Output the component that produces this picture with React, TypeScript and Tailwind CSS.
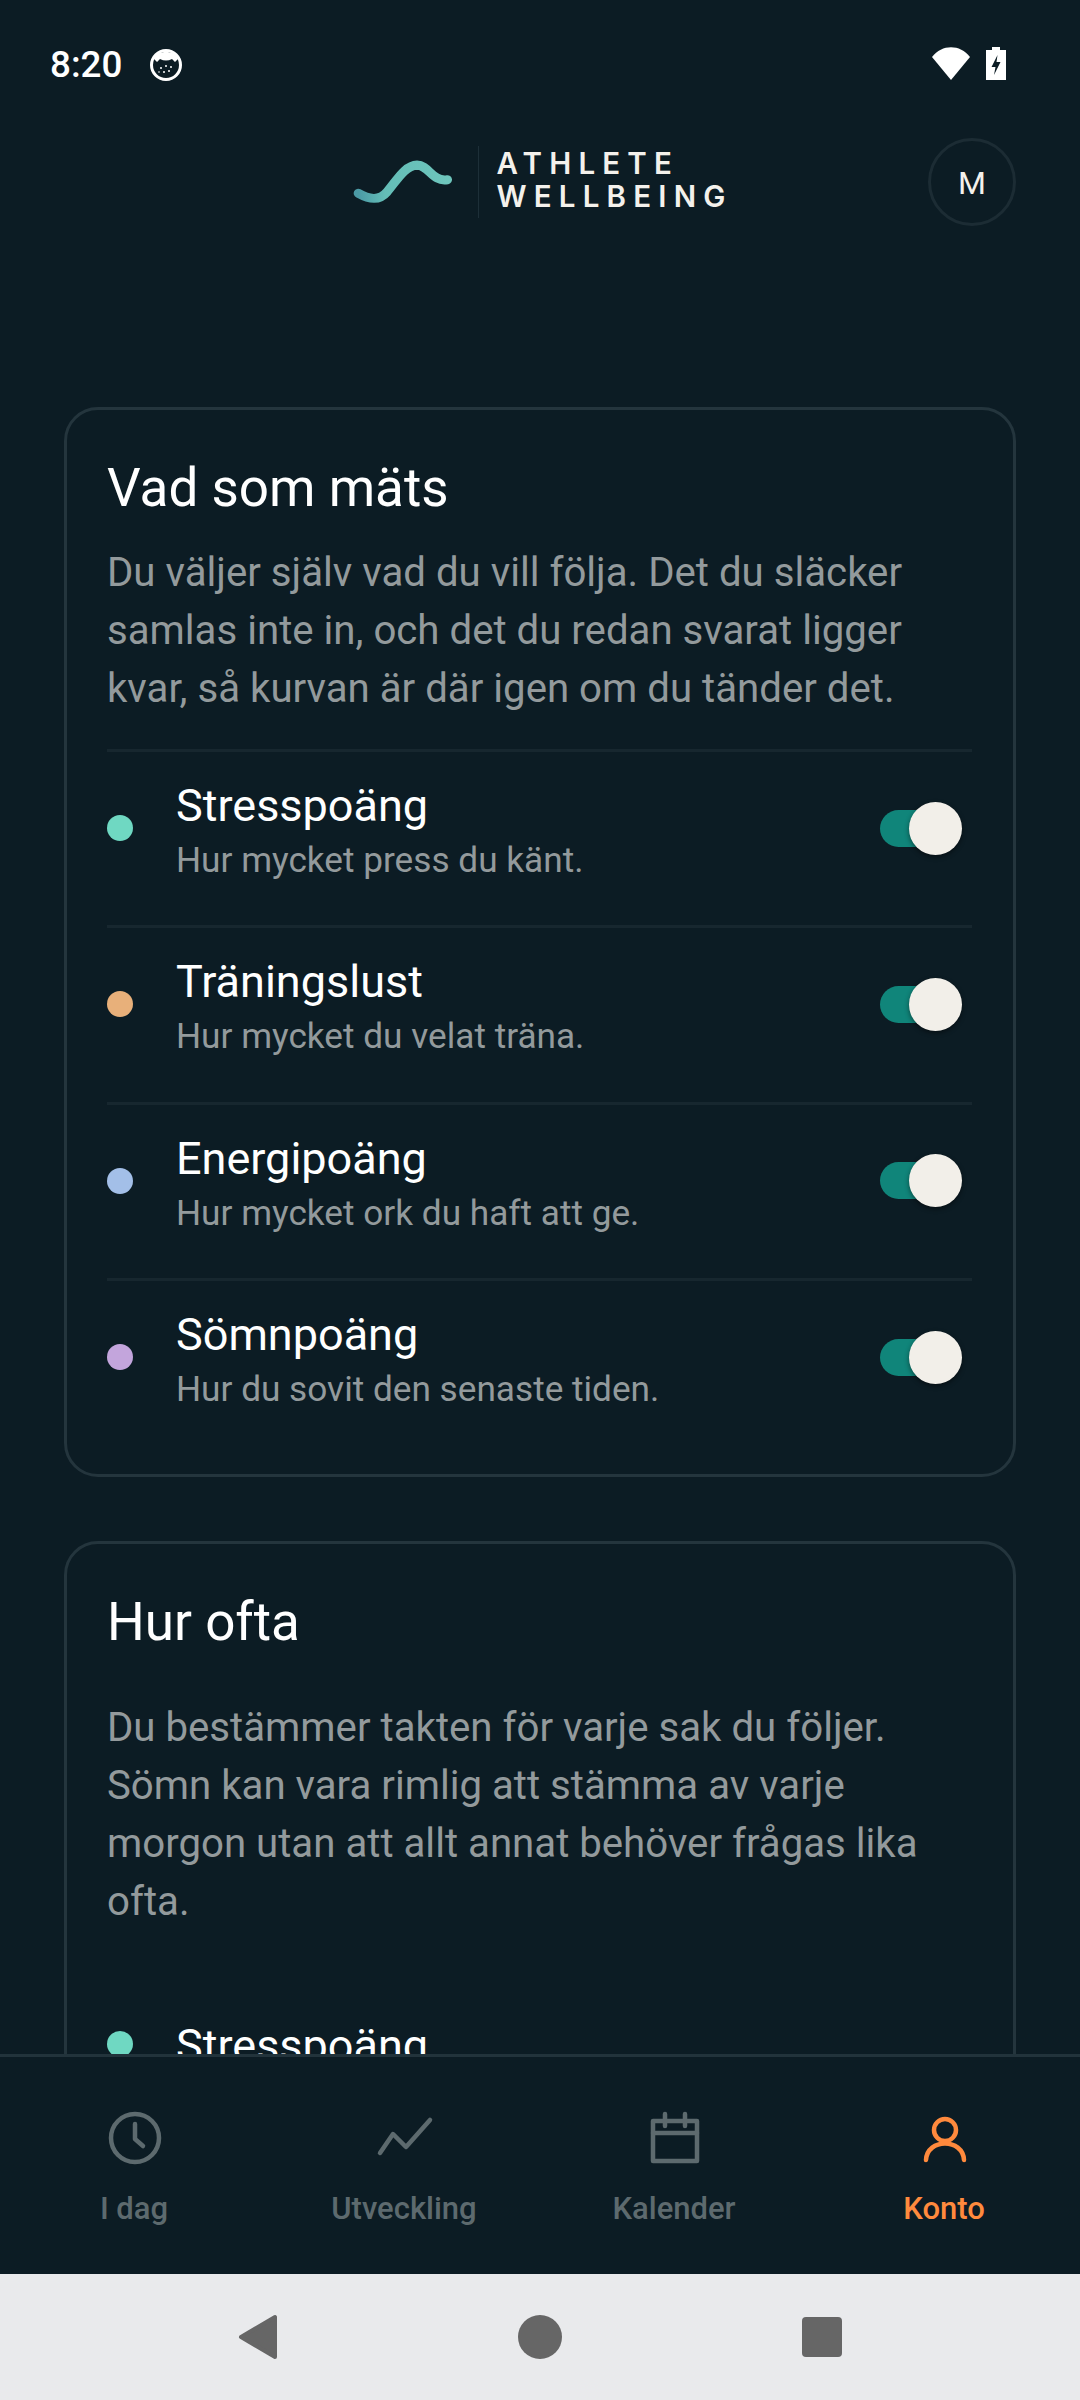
import React from "react";

const metrics = [
  { name: "Stresspoäng", sub: "Hur mycket press du känt.", dot: "bg-[#6fd8c2]" },
  { name: "Träningslust", sub: "Hur mycket du velat träna.", dot: "bg-[#e8b07a]" },
  { name: "Energipoäng", sub: "Hur mycket ork du haft att ge.", dot: "bg-[#a3bfe8]" },
  { name: "Sömnpoäng", sub: "Hur du sovit den senaste tiden.", dot: "bg-[#c3a5dc]" },
];

function Toggle() {
  return (
    <div className="relative h-[37px] w-[72px] rounded-full bg-[#10857a]">
      <div className="absolute right-[-10px] top-[-8px] h-[53px] w-[53px] rounded-full bg-[#f2efe9] shadow-[0_2px_5px_rgba(0,0,0,0.45)]" />
    </div>
  );
}

function Row({ name, sub, dot }: { name: string; sub: string; dot: string }) {
  return (
    <div className="flex h-[176.3px] items-center border-t-[3px] border-[#17272f] pb-[21px]">
      <div className={`h-[26px] w-[26px] shrink-0 rounded-full ${dot}`} />
      <div className="ml-[43px] flex-1 pt-[6px]">
        <div className="text-[45px] leading-[58px] text-white">{name}</div>
        <div className="text-[35.2px] leading-[50px] text-[#939a9c]">{sub}</div>
      </div>
      <div className="mr-[20px]">
        <Toggle />
      </div>
    </div>
  );
}

function NavItem({ label, active, children }: { label: string; active?: boolean; children: React.ReactNode }) {
  return (
    <div className="flex flex-col items-center">
      <div className="h-[64px] w-[64px]">{children}</div>
      <div className={`mt-[18px] pr-[2px] text-[31px] leading-[42px] font-medium ${active ? "text-[#ff8a3d]" : "text-[#5d6a6e]"}`}>{label}</div>
    </div>
  );
}

export default function App() {
  return (
    <div className="flex h-[2400px] w-[1080px] flex-col overflow-hidden bg-[#0c1c24] font-['Roboto',sans-serif]">
      {/* status bar */}
      <div className="flex h-[128px] shrink-0 items-start justify-between pl-[50px] pr-[74px] pt-[43px]">
        <div className="flex items-center">
          <span className="text-[36.75px] leading-[43px] font-medium text-white">8:20</span>
          <svg className="ml-[28px]" width="32" height="32" viewBox="0 0 32 32">
            <circle cx="16" cy="16" r="14.5" fill="#0c1c24" stroke="#fff" strokeWidth="3" />
            <path d="M3 9 C8 1 24 1 29 9 L25 13 L22 10 C18 12 14 12 10 10 L7 13 Z" fill="#fff" />
            <g fill="#fff">
              <circle cx="11" cy="19" r="1" />
              <circle cx="16" cy="17" r="1" />
              <circle cx="21" cy="18" r="1" />
              <circle cx="14" cy="23" r="1" />
              <circle cx="19" cy="22" r="1" />
              <circle cx="9" cy="23" r="0.8" />
            </g>
          </svg>
        </div>
        <div className="flex items-center gap-[16px] pt-[4px]">
          <svg width="38" height="33" viewBox="0 0 38 33">
            <path d="M0 10 C10 -3 28 -3 38 10 L19 33 Z" fill="#fff" />
          </svg>
          <svg width="20" height="33" viewBox="0 0 20 33">
            <path d="M6 0 H14 V3 H20 V33 H0 V3 H6 Z" fill="#fff" />
            <path d="M11.5 8 L5.5 20 H9.5 L8 28 L14.5 15 H10.5 Z" fill="#0c1c24" />
          </svg>
        </div>
      </div>

      {/* header */}
      <div className="grid h-[108px] shrink-0 grid-cols-[1fr_auto_1fr] items-center px-[64px]">
        <div />
        <div className="ml-[6px] flex items-center">
          <svg width="101" height="48.5" viewBox="90 100 312 150">
            <defs>
              <linearGradient id="wave" x1="0" y1="0" x2="1" y2="0">
                <stop offset="0" stopColor="#4b9aa5" />
                <stop offset="0.3" stopColor="#64bdb7" />
                <stop offset="1" stopColor="#6ec5bc" />
              </linearGradient>
            </defs>
            <path d="M106 209 C140 228 170 234 195 205 C225 170 250 123 288 122 C325 122 335 175 382 167" fill="none" stroke="url(#wave)" strokeWidth="28" strokeLinecap="round" />
          </svg>
          <div className="ml-[24px] h-[72px] w-[1px] bg-[#1d2f38]" />
          <div className="ml-[17px] mt-[-5px] font-['Inter',sans-serif] text-[29.5px] leading-[33px] font-semibold tracking-[7.2px] text-[#f4f1ec]">
            <div>ATHLETE</div>
            <div>WELLBEING</div>
          </div>
        </div>
        <div className="flex justify-end">
          <div className="flex h-[88px] w-[88px] items-center justify-center rounded-full border-[3px] border-[#1c2c34] pt-[2px] text-[32px] text-[#f4f1ec]">M</div>
        </div>
      </div>

      {/* content */}
      <div className="flex-1 overflow-hidden px-[64px] pt-[171px]">
        <div className="rounded-[34px] border-[3px] border-[#24353d] pl-[40px] pr-[41px] pt-[42px] pb-[20px]">
          <div className="text-[53px] leading-[72px] text-white">Vad som mäts</div>
          <div className="mt-[20px] mb-[31px] text-[40.2px] leading-[58px] text-[#939a9c]">
            Du väljer själv vad du vill följa. Det du släcker samlas inte in, och det du redan svarat ligger kvar, så kurvan är där igen om du tänder det.
          </div>
          {metrics.map((m) => (
            <Row key={m.name} {...m} />
          ))}
        </div>
        <div className="mt-[64px] rounded-[34px] border-[3px] border-[#24353d] pl-[40px] pr-[41px] pt-[42px] pb-[120px]">
          <div className="text-[53px] leading-[72px] text-white">Hur ofta</div>
          <div className="mt-[41px] mb-[86px] text-[40.2px] leading-[58px] text-[#939a9c]">
            Du bestämmer takten för varje sak du följer. Sömn kan vara rimlig att stämma av varje morgon utan att allt annat behöver frågas lika ofta.
          </div>
          <div className="flex items-center">
            <div className={`mt-[-4px] h-[26px] w-[26px] shrink-0 rounded-full ${metrics[0].dot}`} />
            <div className="ml-[43px] text-[45px] leading-[58px] text-white">{metrics[0].name}</div>
          </div>
        </div>
      </div>

      {/* bottom nav */}
      <div className="grid h-[220px] shrink-0 grid-cols-4 border-t-[3px] border-[#22333b] bg-[#0c1c24] pt-[49px]">
        <NavItem label="I dag">
          <svg viewBox="0 0 64 64" fill="none" stroke="#5d6a6e" strokeWidth="4.5" strokeLinecap="round" strokeLinejoin="round">
            <circle cx="32" cy="32" r="24" />
            <path d="M32 18 V33 L40 40" />
          </svg>
        </NavItem>
        <NavItem label="Utveckling">
          <svg viewBox="0 0 64 64" fill="none" stroke="#5d6a6e" strokeWidth="4.5" strokeLinecap="round" strokeLinejoin="round">
            <path d="M7 47 L20 28 L33 41 L57 14" />
          </svg>
        </NavItem>
        <NavItem label="Kalender">
          <svg viewBox="0 0 64 64" fill="none" stroke="#5d6a6e" strokeWidth="4.5" strokeLinecap="round" strokeLinejoin="round">
            <path d="M10 15 H54 V55 H10 Z" />
            <path d="M10 27 H54" />
            <path d="M22 8 V20 M42 8 V20" />
          </svg>
        </NavItem>
        <NavItem label="Konto" active>
          <svg viewBox="0 0 64 64" fill="none" stroke="#ff8a3d" strokeWidth="4.5" strokeLinecap="round" strokeLinejoin="round">
            <circle cx="32" cy="24" r="11" />
            <path d="M13 54 C14 32 50 32 51 54" />
          </svg>
        </NavItem>
      </div>

      {/* system nav */}
      <div className="flex h-[126px] shrink-0 items-center justify-center gap-[240px] bg-[#e9eaec]">
        <svg width="40" height="46" viewBox="0 0 40 46">
          <path d="M37 3 V43 L3 23 Z" fill="#666" stroke="#666" strokeWidth="4" strokeLinejoin="round" />
        </svg>
        <div className="h-[44px] w-[44px] rounded-full bg-[#666]" />
        <div className="h-[40px] w-[40px] rounded-[4px] bg-[#666]" />
      </div>
    </div>
  );
}
